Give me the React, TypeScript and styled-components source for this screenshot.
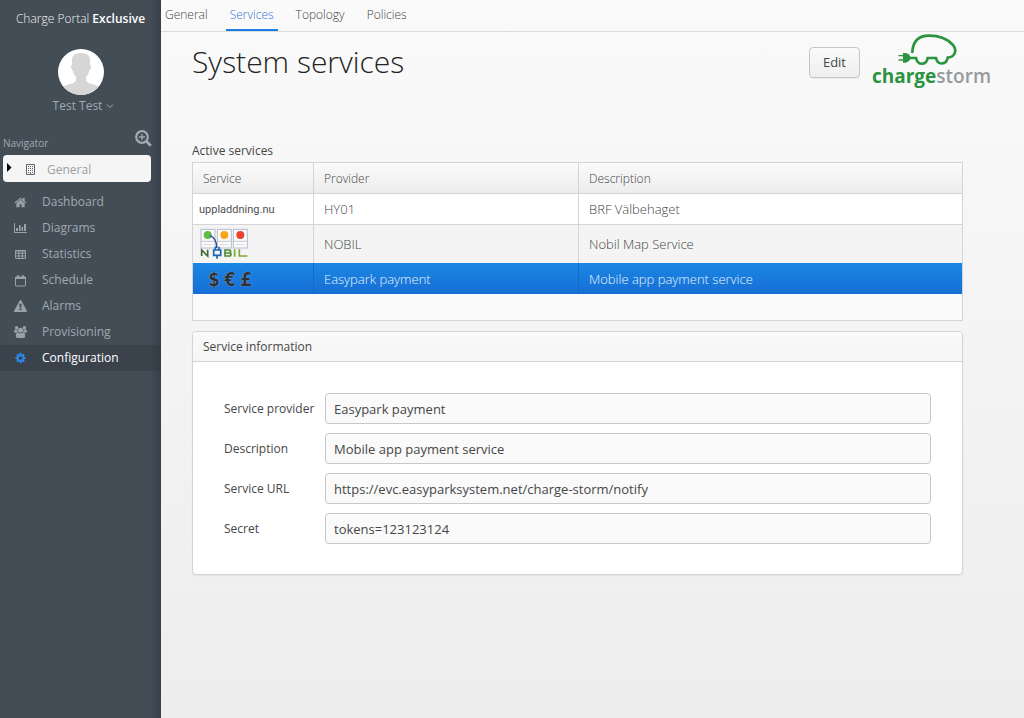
import React, { ReactNode } from "react";
import styled, { createGlobalStyle } from "styled-components";

const GlobalStyle = createGlobalStyle`
  *, *::before, *::after { box-sizing: border-box; }
  body {
    margin: 0;
    background: #f0f0f0;
    color: #464646;
    font: 400 12px/18px "Open Sans", "Noto Sans", sans-serif;
  }
  button, input { font: inherit; color: inherit; }
  a { color: inherit; text-decoration: none; }
`;

const Layout = styled.div`
  display: grid;
  grid-template-columns: 161px minmax(0, 1fr);
  min-height: 100vh;
`;

const Sidebar = styled.aside`
  display: flex;
  flex-direction: column;
  background: linear-gradient(to right, transparent 150px, #373f49 161px), #434d56;
  color: #a1a9b1;
`;

const Brand = styled.div`
  padding: 10px 0 9px;
  text-align: center;
  font-weight: 300;
  color: #eef1f3;
  strong { color: #ffffff; font-weight: 600; }
`;

const UserMenu = styled.button`
  display: flex;
  flex-direction: column;
  align-items: center;
  gap: 3px;
  margin-top: 12px;
  padding: 0;
  border: 0;
  background: none;
  cursor: pointer;
`;

const UserName = styled.span`
  display: flex;
  align-items: center;
  gap: 4px;
  padding-left: 6px;
  line-height: 16px;
`;

const NavigatorHeader = styled.div`
  display: flex;
  justify-content: space-between;
  align-items: flex-end;
  height: 38px;
  padding: 0 9px 0 3px;
  font-size: 10px;
  line-height: 18px;
`;

const ZoomButton = styled.button`
  display: flex;
  margin-bottom: 5px;
  padding: 0;
  border: 0;
  background: none;
`;

const GeneralButton = styled.button`
  display: flex;
  align-items: center;
  height: 27px;
  margin: 3px 10px 7px 3px;
  padding: 2px 0 0 4px;
  border: 0;
  border-radius: 4px;
  background: #f5f5f5;
  color: #9a9fa5;
  span { margin-left: 12px; }
  svg:first-child { margin: 0 14px 4px 0; }
`;

const NavList = styled.nav`
  display: flex;
  flex-direction: column;
`;

const NavItem = styled.a<{ $active?: boolean }>`
  display: flex;
  align-items: center;
  gap: 15px;
  height: 26px;
  padding-left: 14px;
  color: ${(p) => (p.$active ? "#ffffff" : "#a1a9b1")};
  background: ${(p) => (p.$active ? "rgba(50, 56, 66, 0.5)" : "none")};
  svg { color: ${(p) => (p.$active ? "#2d83e0" : "#99a2aa")}; }
`;

const Main = styled.main`
  background: linear-gradient(#fafafa, #ededed);
`;

const Tabs = styled.nav`
  display: flex;
  gap: 14px;
  height: 32px;
  border-bottom: 1px solid #dcdcdc;
  font-weight: 300;
`;

const Tab = styled.a<{ $active?: boolean }>`
  padding: 6px 4px 0;
  color: ${(p) => (p.$active ? "#3a78dc" : "#464646")};
  border-bottom: 2px solid ${(p) => (p.$active ? "#197de1" : "transparent")};
`;

const PageHeader = styled.header`
  display: flex;
  align-items: flex-start;
  padding: 1px 32px 0 31px;
  h1 {
    flex: 1;
    margin: 7px 0 0;
    font-size: 30px;
    line-height: 44px;
    font-weight: 300;
    color: #222222;
  }
`;

const EditButton = styled.button`
  height: 31px;
  margin: 14px 12px 0 0;
  padding: 0 13px 2px;
  border: 1px solid #c5c5c5;
  border-radius: 4px;
  background: linear-gradient(#fafafa, #efefef);
  box-shadow: 0 1px 0 rgba(0, 0, 0, 0.05);
  font-size: 13px;
`;

const Content = styled.div`
  padding: 53px 61px 40px 31px;
`;

const TableFrame = styled.div`
  padding-bottom: 26px;
  border: 1px solid #d4d4d4;
  background: #fafafa;
`;

const Table = styled.table`
  width: 100%;
  table-layout: fixed;
  border-collapse: separate;
  border-spacing: 0;
  font-size: 13px;
  font-weight: 300;
  th, td {
    padding: 0 10px;
    text-align: left;
    font-weight: 300;
    border-right: 1px solid #d4d4d4;
  }
  th {
    height: 31px;
    padding-top: 1px;
    font-size: 12px;
    background: linear-gradient(#fafafa, #ededed);
    border-bottom: 1px solid #d4d4d4;
  }
  th:last-child, td:last-child { border-right: 0; }
  td:first-child { padding-left: 6px; }
`;

const Caption = styled.h2`
  margin: 0 0 2px;
  font-size: 12px;
  line-height: 18px;
  font-weight: 400;
`;

const ServiceCol = styled.col`
  width: 121px;
`;

const ProviderCol = styled.col`
  width: 265px;
`;

type RowKind = "plain" | "striped" | "selected";

const Row = styled.tr<{ $kind: RowKind }>`
  background: ${(p) =>
    p.$kind === "selected" ? "linear-gradient(#1b87e3, #166ed5)" : p.$kind === "striped" ? "#f4f4f4" : "#ffffff"};
  color: ${(p) => (p.$kind === "selected" ? "#e8f3fc" : "#464646")};
  td {
    height: ${(p) => (p.$kind === "striped" ? 38 : 31)}px;
    border-bottom: ${(p) => (p.$kind === "plain" ? "1px solid #d4d4d4" : "0")};
    border-right-color: ${(p) => (p.$kind === "selected" ? "#1668c0" : "#d4d4d4")};
  }
  svg { display: block; }
`;

const Wordmark = styled.span`
  font-family: Roboto, "Liberation Sans", sans-serif;
  font-size: 11px;
  font-weight: 400;
  color: #505050;
`;

const Panel = styled.section`
  margin-top: 10px;
  border: 1px solid #d4d4d4;
  border-radius: 4px;
  background: #ffffff;
  box-shadow: 0 1px 2px rgba(0, 0, 0, 0.06);
`;

const PanelTitle = styled.h2`
  margin: 0;
  padding: 6px 10px 5px;
  border-bottom: 1px solid #d4d4d4;
  border-radius: 3px 3px 0 0;
  background: linear-gradient(#fafafa, #f5f5f5);
  font-size: 12px;
  line-height: 18px;
  font-weight: 400;
`;

const Form = styled.form`
  display: grid;
  gap: 9px;
  padding: 31px 31px 30px;
`;

const Field = styled.div`
  display: grid;
  grid-template-columns: 101px minmax(0, 1fr);
  align-items: center;
  input {
    height: 31px;
    padding: 0 8px;
    border: 1px solid #c8c8c8;
    border-radius: 4px;
    background: #fafafa;
    font-size: 13px;
    outline: none;
  }
`;

const HomeIcon = () => (
  <svg width="13" height="13" viewBox="0 0 1792 1792" fill="currentColor">
    <path d="M1472 992v480q0 26-19 45t-45 19h-384v-384h-256v384h-384q-26 0-45-19t-19-45v-480q0-1 .5-3t.5-3l575-474 575 474q1 2 1 6zm223-69l-62 74q-8 9-21 11h-3q-13 0-21-7l-692-577-692 577q-12 8-24 7-13-2-21-11l-62-74q-8-10-7-23.5t11-21.5l719-599q32-26 76-26t76 26l244 204v-195q0-14 9-23t23-9h192q14 0 23 9t9 23v408l219 182q10 8 11 21.5t-7 23.5z" />
  </svg>
);

const ChartIcon = () => (
  <svg width="13" height="12" viewBox="0 0 13 12" fill="currentColor">
    <path d="M0 1h1v9h12v1H0zM2 6h2v3H2zM5 3h1.600v6H5zM7.500 5h1.600v4H7.500zM10 2h2v7h-2z" />
  </svg>
);

const GridIcon = () => (
  <svg width="13" height="11" viewBox="0 0 13 11" fill="none" stroke="currentColor">
    <rect x="1.500" y="1.500" width="10" height="8" rx="0.500" />
    <path d="M1 2h11M1 4.200h11M1 7h11M4.800 1v9M8.300 1v9" />
  </svg>
);

const CalendarIcon = () => (
  <svg width="13" height="13" viewBox="0 0 13 13" fill="none" stroke="currentColor">
    <rect x="1.500" y="3" width="10" height="9" rx="0.500" />
    <path d="M1 4h11" strokeWidth="2" />
    <path d="M4 1v3M9 1v3" strokeWidth="1.600" />
  </svg>
);

const WarningIcon = () => (
  <svg width="13" height="13" viewBox="0 0 1792 1792" fill="currentColor">
    <path d="M1024 1375v-190q0-14-9.500-23.500t-22.500-9.500h-192q-13 0-22.500 9.500t-9.500 23.500v190q0 14 9.500 23.500t22.500 9.500h192q13 0 22.500-9.500t9.500-23.500zm-2-374l18-459q0-12-10-19-13-11-24-11h-220q-11 0-24 11-10 7-10 21l17 457q0 10 10 16.500t24 6.500h185q14 0 23.500-6.500t10.500-16.500zm-14-934l768 1408q35 63-2 126-17 29-46.500 46t-63.500 17h-1536q-34 0-63.500-17t-46.500-46q-37-63-2-126l768-1408q17-31 47-49t65-18 65 18 47 49z" />
  </svg>
);

const UsersIcon = () => (
  <svg width="13" height="12" viewBox="0 0 1920 1792" fill="currentColor">
    <path d="M593 896q-162 5-265 128h-134q-82 0-138-40.500t-56-118.500q0-353 124-353 6 0 43.500 21t97.500 42.500 119 21.500q67 0 133-23-5 37-5 66 0 139 81 256zm1071 637q0 120-73 189.500t-194 69.500h-874q-121 0-194-69.500t-73-189.500q0-53 3.500-103.500t14-109 26.500-108.500 43-97.500 62-81 85.500-53.500 111.500-20q10 0 43 21.500t73 48 107 48 135 21.500 135-21.500 107-48 73-48 43-21.500q61 0 111.500 20t85.500 53.500 62 81 43 97.500 26.500 108.500 14 109 3.500 103.500zm-1024-1277q0 106-75 181t-181 75-181-75-75-181 75-181 181-75 181 75 75 181zm704 384q0 159-112.500 271.500t-271.500 112.500-271.500-112.500-112.500-271.500 112.500-271.500 271.500-112.500 271.500 112.500 112.500 271.500zm576 225q0 78-56 118.500t-138 40.500h-134q-103-123-265-128 81-117 81-256 0-29-5-66 66 23 133 23 59 0 119-21.500t97.500-42.500 43.500-21q124 0 124 353zm-128-609q0 106-75 181t-181 75-181-75-75-181 75-181 181-75 181 75 75 181z" />
  </svg>
);

const CogIcon = () => (
  <svg width="13" height="12" viewBox="0 0 1792 1792" fill="currentColor">
    <path d="M1152 896q0-106-75-181t-181-75-181 75-75 181 75 181 181 75 181-75 75-181zm512-109v222q0 12-8 23t-20 13l-185 28q-19 54-39 91 35 50 107 138 10 12 10 25t-9 23q-27 37-99 108t-94 71q-12 0-26-9l-138-108q-44 23-91 38-16 136-29 186-7 28-36 28h-222q-14 0-24.500-8.500t-11.500-21.500l-28-184q-49-16-90-37l-141 107q-10 9-25 9-14 0-25-11-126-114-165-168-7-10-7-23 0-12 8-23 15-21 51-66.500t54-70.500q-27-50-41-99l-183-27q-13-2-21-12.500t-8-23.500v-222q0-12 8-23t19-13l186-28q14-46 39-92-40-57-107-138-10-12-10-24 0-10 9-23 26-36 98.500-107.500t94.500-71.500q13 0 26 10l138 107q44-23 91-38 16-136 29-186 7-28 36-28h222q14 0 24.500 8.500t11.500 21.500l28 184q49 16 90 37l142-107q9-9 24-9 13 0 25 10 129 119 165 170 7 8 7 22 0 12-8 23-15 21-51 66.500t-54 70.500q26 50 41 98l183 28q13 2 21 12.500t8 23.500z" />
  </svg>
);

const BuildingIcon = () => (
  <svg width="9" height="11" viewBox="0 0 9 11" fill="none" stroke="#606468">
    <path d="M.5.5h8v10h-8z" />
    <path d="M2 2.500h5M2 4.500h5M2 6.500h5M2 8.500h1M6 8.500h1" strokeDasharray="1 1" />
    <path d="M4.500 8v3" />
  </svg>
);

const Avatar = () => (
  <svg width="46" height="46" viewBox="0 0 46 46">
    <clipPath id="avatar-clip">
      <circle cx="23" cy="23" r="23" />
    </clipPath>
    <circle cx="23" cy="23" r="23" fill="#ffffff" />
    <path
      clipPath="url(#avatar-clip)"
      fill="#d6d6d6"
      d="M14 11Q14 4 23 4t9 7v5q1 0 1 2t-2 4q0 3-3 6v3q1 3 6 4 7 2 10 5v11H2V40q3-3 10-5 5-1 6-4v-3q-3-3-3-6-2-2-2-4t1-2z"
    />
  </svg>
);

const ZoomInIcon = () => (
  <svg width="17" height="17" viewBox="0 0 17 17" fill="none" stroke="#a1a9b1">
    <circle cx="7" cy="7" r="5.800" strokeWidth="2.200" />
    <path d="M11.300 11.300l4.500 4.500" strokeWidth="2.800" />
    <path d="M4 7h6M7 4v6" strokeWidth="1.300" />
  </svg>
);

const Logo = () => (
  <svg width="120" height="56" viewBox="245 38 360 168" role="img" aria-label="chargestorm">
    <g fill="none" stroke="#2a9440" strokeWidth="8" strokeLinecap="round">
      <path d="M366 95C368 62 386 46 416 46c32 0 56 10 72 28 12 15 8 35-16 38-4 22-30 24-35 1h-25c-4 23-30 23-35 0h-22" />
      <path d="M326 106h14M326 119h14" strokeWidth="4" />
    </g>
    <path d="M338 98h8c10 2 14 8 14 14s-4 12-14 15h-8z" fill="#2a9440" />
    <text x="245" y="188" fontFamily="Open Sans, Noto Sans, sans-serif" fontSize="57" fontWeight="700" fill="#2a9440">
      charge<tspan fontWeight="600" fill="#97999c">storm</tspan>
    </text>
  </svg>
);

const NobilLogo = () => (
  <svg width="50" height="32" viewBox="0 0 150 96" role="img" aria-label="NOBIL">
    <g fill="#fbfbfb" stroke="#b6bccb" strokeWidth="3">
      <rect x="6" y="4" width="42" height="56" />
      <rect x="55" y="4" width="42" height="56" />
      <rect x="103" y="4" width="42" height="56" />
    </g>
    <path d="M8 40h38M57 40h38M105 40h38" stroke="#c2c6cf" strokeWidth="3" />
    <path d="M14 50h26M63 50h26M111 50h26" stroke="#c9c9c9" strokeWidth="3" strokeDasharray="6 2" />
    <circle cx="26" cy="21" r="12" fill="#62bb46" />
    <circle cx="76" cy="21" r="12" fill="#f9a51a" />
    <circle cx="124" cy="21" r="12" fill="#ef4130" />
    <path d="M32 22q22 8 21 38" fill="none" stroke="#24479b" strokeWidth="4" />
    <g fill="none" strokeWidth="5">
      <path d="M8 84V66l18 18V65" stroke="#3f6b38" />
      <path d="M44 66h21v16H44zM49 56v10M60 56v10M54 82v10" stroke="#1c65b5" />
      <path d="M78 66h14q6 4 0 9H78zM78 75h15q6 5 0 9H78z" stroke="#4b8a36" />
      <path d="M107 64v22M121 64v20h24" stroke="#7da82e" />
    </g>
  </svg>
);

const CurrencyMark = styled.span`
  display: flex;
  gap: 4px;
  padding-left: 9px;
  font: 700 20px/30px "DejaVu Sans Mono", monospace;
  color: #2c3038;
  text-shadow: 0 0 1px #c8d4e4;
`;

const navItems: { label: string; icon: ReactNode; active?: boolean }[] = [
  { label: "Dashboard", icon: <HomeIcon /> },
  { label: "Diagrams", icon: <ChartIcon /> },
  { label: "Statistics", icon: <GridIcon /> },
  { label: "Schedule", icon: <CalendarIcon /> },
  { label: "Alarms", icon: <WarningIcon /> },
  { label: "Provisioning", icon: <UsersIcon /> },
  { label: "Configuration", icon: <CogIcon />, active: true },
];

const services: { kind: RowKind; mark: ReactNode; provider: string; description: string }[] = [
  { kind: "plain", mark: <Wordmark>uppladdning.nu</Wordmark>, provider: "HY01", description: "BRF Välbehaget" },
  { kind: "striped", mark: <NobilLogo />, provider: "NOBIL", description: "Nobil Map Service" },
  {
    kind: "selected",
    mark: (
      <CurrencyMark>
        <span>$</span>
        <span>€</span>
        <span>£</span>
      </CurrencyMark>
    ),
    provider: "Easypark payment",
    description: "Mobile app payment service",
  },
];

const fields = [
  { id: "provider", label: "Service provider", value: "Easypark payment" },
  { id: "description", label: "Description", value: "Mobile app payment service" },
  { id: "url", label: "Service URL", value: "https://evc.easyparksystem.net/charge-storm/notify" },
  { id: "secret", label: "Secret", value: "tokens=123123124" },
];

export default function App() {
  return (
    <>
      <GlobalStyle />
      <Layout>
        <Sidebar>
          <Brand>
            Charge Portal <strong>Exclusive</strong>
          </Brand>
          <UserMenu type="button">
            <Avatar />
            <UserName>
              Test Test
              <svg width="8" height="6" viewBox="0 0 8 6" fill="none" stroke="currentColor">
                <path d="M1 1.500l3 3 3-3" />
              </svg>
            </UserName>
          </UserMenu>
          <NavigatorHeader>
            Navigator
            <ZoomButton type="button" aria-label="Zoom in">
              <ZoomInIcon />
            </ZoomButton>
          </NavigatorHeader>
          <GeneralButton type="button">
            <svg width="5" height="9" viewBox="0 0 5 9">
              <path d="M0 0l4.500 4.500L0 9z" fill="#000000" />
            </svg>
            <BuildingIcon />
            <span>General</span>
          </GeneralButton>
          <NavList>
            {navItems.map((item) => (
              <NavItem key={item.label} href="#" $active={item.active}>
                {item.icon}
                {item.label}
              </NavItem>
            ))}
          </NavList>
        </Sidebar>
        <Main>
          <Tabs>
            {["General", "Services", "Topology", "Policies"].map((tab) => (
              <Tab key={tab} href="#" $active={tab === "Services"}>
                {tab}
              </Tab>
            ))}
          </Tabs>
          <PageHeader>
            <h1>System services</h1>
            <EditButton type="button">Edit</EditButton>
            <Logo />
          </PageHeader>
          <Content>
            <Caption>Active services</Caption>
            <TableFrame>
              <Table>
                <colgroup>
                  <ServiceCol />
                  <ProviderCol />
                  <col />
                </colgroup>
                <thead>
                  <tr>
                    <th>Service</th>
                    <th>Provider</th>
                    <th>Description</th>
                  </tr>
                </thead>
                <tbody>
                  {services.map((s) => (
                    <Row key={s.provider} $kind={s.kind}>
                      <td>{s.mark}</td>
                      <td>{s.provider}</td>
                      <td>{s.description}</td>
                    </Row>
                  ))}
                </tbody>
              </Table>
            </TableFrame>
            <Panel>
              <PanelTitle>Service information</PanelTitle>
              <Form>
                {fields.map((f) => (
                  <Field key={f.id}>
                    <label htmlFor={f.id}>{f.label}</label>
                    <input id={f.id} type="text" defaultValue={f.value} readOnly />
                  </Field>
                ))}
              </Form>
            </Panel>
          </Content>
        </Main>
      </Layout>
    </>
  );
}
